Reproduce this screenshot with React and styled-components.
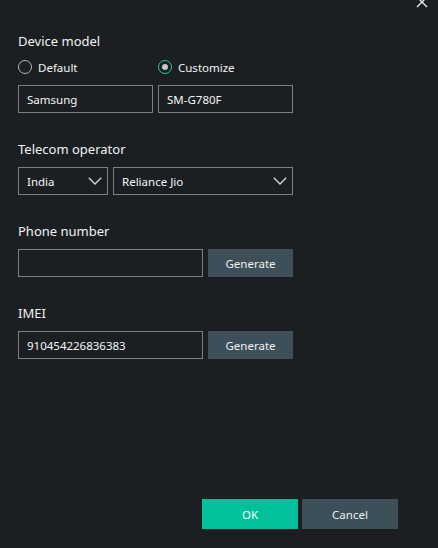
import React, { useState } from 'react';
import styled, { createGlobalStyle } from 'styled-components';

const GlobalStyle = createGlobalStyle`
  html, body {
    margin: 0;
    padding: 0;
    background: #1b1f22;
  }
  body {
    font-family: "Noto Sans", "Open Sans", sans-serif;
    color: #eaeaea;
  }
`;

const Dialog = styled.div`
  position: relative;
  width: 438px;
  height: 548px;
  box-sizing: border-box;
  padding: 31px 40px 19px 18px;
  display: flex;
  flex-direction: column;
  background: #1b1f22;
  overflow: hidden;
`;

const CloseBtn = styled.button`
  position: absolute;
  top: -4px;
  right: 10px;
  width: 12px;
  height: 12px;
  padding: 0;
  border: none;
  background: none;
  cursor: pointer;
  display: flex;
`;

const Section = styled.div`
  display: flex;
  flex-direction: column;
  margin-bottom: 26px;
`;

const Label = styled.div`
  font-size: 13px;
  line-height: 20px;
  color: #f2f2f2;
  margin-bottom: ${(p) => p.gap || 8}px;
`;

const RadioRow = styled.div`
  display: flex;
  height: 18px;
  margin-bottom: 9px;
`;

const RadioOption = styled.label`
  display: flex;
  align-items: center;
  gap: 6px;
  width: 140px;
  font-size: 11.5px;
  color: #f4f4f4;
  cursor: pointer;
`;

const RadioCircle = styled.span`
  width: 14px;
  height: 14px;
  box-sizing: border-box;
  border-radius: 50%;
  border: 1.5px solid ${(p) => (p.checked ? '#1fc9a5' : '#b8b8b8')};
  display: flex;
  align-items: center;
  justify-content: center;
  &::after {
    content: '';
    width: 6px;
    height: 6px;
    border-radius: 50%;
    background: ${(p) => (p.checked ? '#c8c8c8' : 'transparent')};
  }
`;

const Row = styled.div`
  display: flex;
  gap: 5px;
`;

const TextBox = styled.input`
  width: ${(p) => p.w}px;
  height: 28px;
  box-sizing: border-box;
  border: 1px solid #7d7f80;
  background: #1b1f22;
  color: #f6f6f6;
  font-family: inherit;
  font-size: 11.5px;
  padding: 0 8px;
  outline: none;
`;

const Select = styled.div`
  width: ${(p) => p.w}px;
  height: 28px;
  box-sizing: border-box;
  border: 1px solid #7d7f80;
  display: flex;
  align-items: center;
  justify-content: space-between;
  padding: 0 5px 0 8px;
  font-size: 11.5px;
  color: #f6f6f6;
`;

const GrayButton = styled.button`
  width: ${(p) => p.w || 85}px;
  height: ${(p) => p.h || 28}px;
  padding: 0;
  border: none;
  background: #3d4f58;
  color: #eef0f0;
  font-family: inherit;
  font-size: 11.5px;
  cursor: pointer;
`;

const OkButton = styled(GrayButton)`
  background: #00c19a;
  color: #f4fffb;
`;

const Footer = styled.div`
  margin-top: auto;
  display: flex;
  justify-content: flex-end;
  gap: 4px;
`;

const Chevron = () => (
  <svg width="14" height="8" viewBox="0 0 14 8" fill="none">
    <path d="M0.8 0.8 L7 7 L13.2 0.8" stroke="#d8d8d8" strokeWidth="1.3" />
  </svg>
);

export default function App() {
  const [mode, setMode] = useState('custom');

  return (
    <>
      <GlobalStyle />
      <Dialog>
        <CloseBtn aria-label="Close">
          <svg width="12" height="12" viewBox="0 0 12 12">
            <path d="M1 1 L11 11 M11 1 L1 11" stroke="#f2f2f2" strokeWidth="1.3" />
          </svg>
        </CloseBtn>

        <Section>
          <Label gap={7}>Device model</Label>
          <RadioRow>
            <RadioOption onClick={() => setMode('default')}>
              <RadioCircle checked={mode === 'default'} />
              Default
            </RadioOption>
            <RadioOption onClick={() => setMode('custom')}>
              <RadioCircle checked={mode === 'custom'} />
              Customize
            </RadioOption>
          </RadioRow>
          <Row>
            <TextBox w={135} defaultValue="Samsung" />
            <TextBox w={135} defaultValue="SM-G780F" />
          </Row>
        </Section>

        <Section>
          <Label>Telecom operator</Label>
          <Row>
            <Select w={90}>
              India
              <Chevron />
            </Select>
            <Select w={180}>
              Reliance Jio
              <Chevron />
            </Select>
          </Row>
        </Section>

        <Section>
          <Label>Phone number</Label>
          <Row>
            <TextBox w={185} defaultValue="" />
            <GrayButton>Generate</GrayButton>
          </Row>
        </Section>

        <Section>
          <Label>IMEI</Label>
          <Row>
            <TextBox w={185} defaultValue="910454226836383" />
            <GrayButton>Generate</GrayButton>
          </Row>
        </Section>

        <Footer>
          <OkButton w={96} h={30}>OK</OkButton>
          <GrayButton w={96} h={30}>Cancel</GrayButton>
        </Footer>
      </Dialog>
    </>
  );
}
